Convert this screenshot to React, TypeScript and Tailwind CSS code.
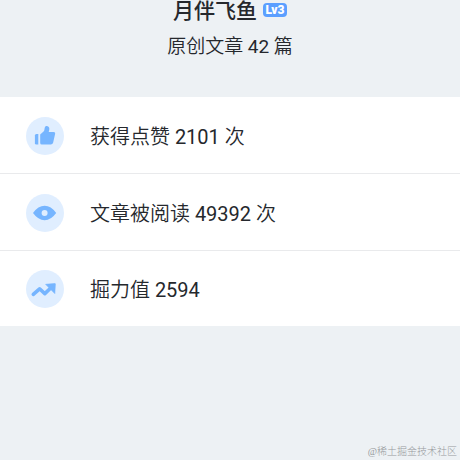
import type { ReactNode } from 'react';

function ThumbIcon() {
  return (
    <svg viewBox="0 0 38 38" className="size-full" fill="#76b5ff" aria-hidden="true">
      <path d="M8.9 18.6Q8.9 17 10.4 17H12.3V27.6H10.4Q8.9 27.6 8.9 26.2Z" />
      <path d="M14.2 17.6L17.8 14.2C18.6 13.2 18.4 11.6 18.8 10.4C19.4 8.8 21.2 8.5 22.2 9.4C23.8 10.5 23.5 12.6 22.7 15H27.6C28.9 15 29.4 15.9 29.1 17L27.1 25.8Q26.6 27.6 24.8 27.6H15.8Q14.2 27.6 14.2 26Z" />
    </svg>
  );
}

function EyeIcon() {
  return (
    <svg viewBox="0 0 38 38" className="size-full" fill="#76b5ff" aria-hidden="true">
      <path
        fillRule="evenodd"
        d="M7 19Q12.2 11.8 18.6 11.8T30.2 19Q25 26.2 18.6 26.2T7 19ZM18.6 16a3 3 0 1 0 0 6a3 3 0 1 0 0-6Z"
      />
    </svg>
  );
}

function TrendIcon() {
  return (
    <svg viewBox="0 0 38 38" className="size-full" aria-hidden="true">
      <path d="M7.3 24.4L13.6 18.8L18.8 23.6L25.5 17.2" fill="none" stroke="#76b5ff" strokeWidth="3.6" strokeLinejoin="round" strokeLinecap="round" />
      <path d="M19.6 14.3L28.9 13.5Q29.4 13.5 29.4 14L28.8 23.6Z" fill="#76b5ff" stroke="#76b5ff" strokeWidth="0.6" strokeLinejoin="round" />
    </svg>
  );
}

const stats: { label: string; value: number; unit: string; icon: ReactNode }[] = [
  { label: '获得点赞', value: 2101, unit: '次', icon: <ThumbIcon /> },
  { label: '文章被阅读', value: 49392, unit: '次', icon: <EyeIcon /> },
  { label: '掘力值', value: 2594, unit: '', icon: <TrendIcon /> },
];

export default function App() {
  return (
    <div className="flex min-h-screen flex-col bg-[#edf1f4] font-[Roboto,'Noto_Sans_CJK_SC',sans-serif] text-[#25282d]">
      <header className="flex flex-col items-center pb-[38px]">
        <div className="flex items-start gap-1.5">
          <h1 className="text-[21px] leading-[22px] font-medium">月伴飞鱼</h1>
          <span className="mt-[3px] flex h-3.5 w-6 items-center justify-center rounded-sm bg-[#5b9fff] text-[12px] leading-none font-black text-white">
            Lv3
          </span>
        </div>
        <p className="mt-3 text-[19px] leading-[25px] font-[350]">
          原创文章 <span className="font-normal">42</span> 篇
        </p>
      </header>

      <ul className="divide-y divide-[#e9eaec] bg-white">
        {stats.map((s) => (
          <li key={s.label} className="flex h-[77px] items-center gap-[26px] px-[26px] pt-px last:h-[75px]">
            <span className="size-[38px] shrink-0 rounded-full bg-[#e0eeff]">{s.icon}</span>
            <span className="pt-0.5 text-[20px] leading-7 font-[350]">
              {s.label} <span className="font-normal">{s.value}</span> {s.unit}
            </span>
          </li>
        ))}
      </ul>

      <footer className="mt-auto px-[3px] pb-0.5 text-right font-['Liberation_Serif','Noto_Sans_CJK_SC',serif] text-[10px] leading-3 font-light text-[#96999c]">
        @稀土掘金技术社区
      </footer>
    </div>
  );
}
